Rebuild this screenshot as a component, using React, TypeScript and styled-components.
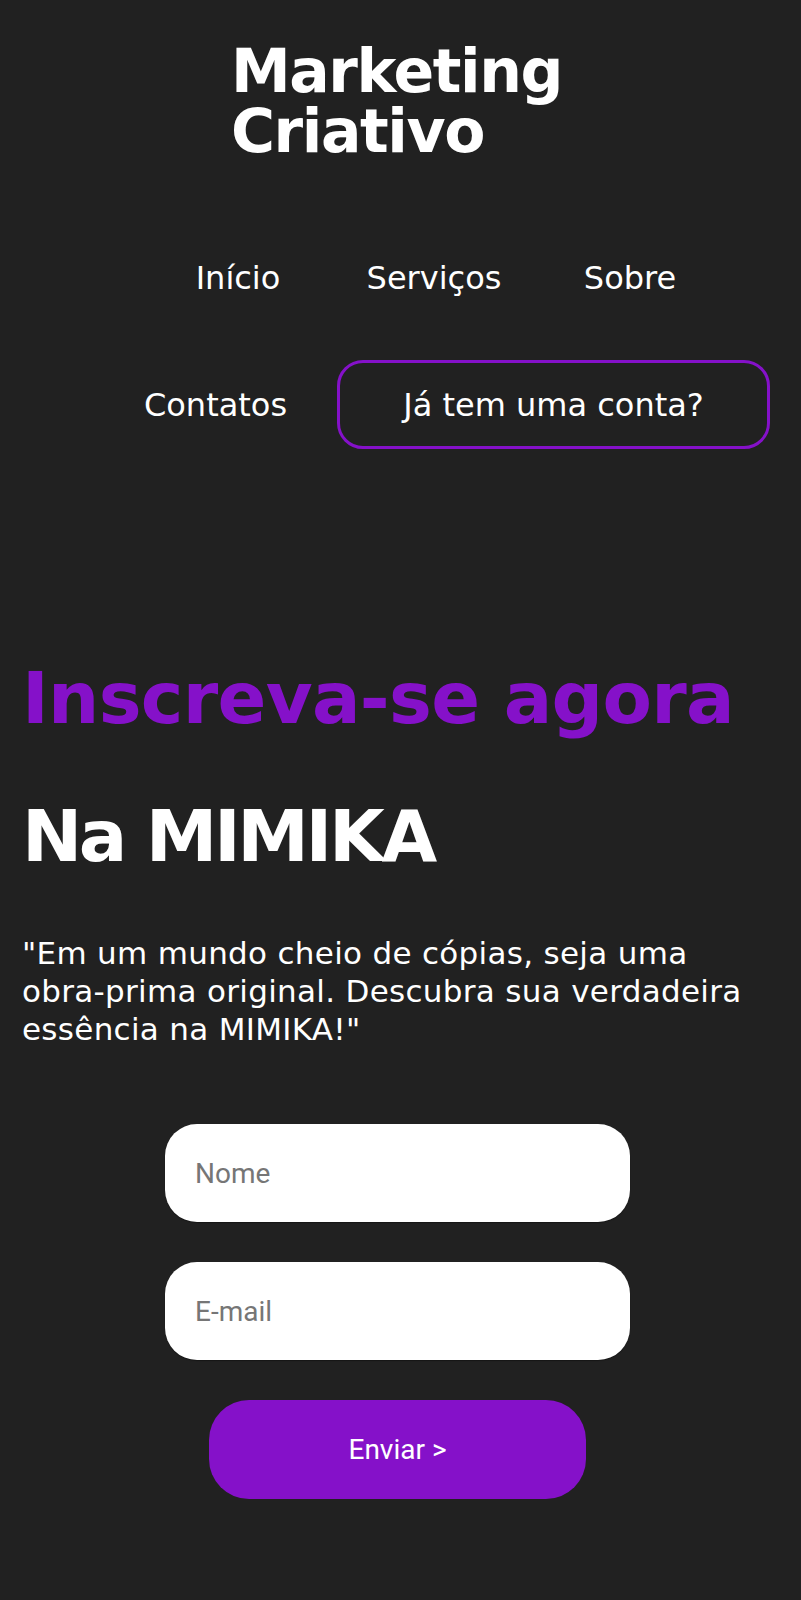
import React from "react";
import styled, { createGlobalStyle } from "styled-components";

const GlobalStyle = createGlobalStyle`
  * { box-sizing: border-box; }
  html, body {
    margin: 0;
    padding: 0;
    background: #212121;
  }
  body {
    min-height: 100vh;
    font-family: "DejaVu Sans", "Liberation Sans", sans-serif;
    color: #ffffff;
  }
`;

const PURPLE = "#8511c9";

const Page = styled.div`
  min-height: 1600px;
  background: #212121;
  display: flex;
  flex-direction: column;
`;

const Header = styled.header`
  display: flex;
  flex-direction: column;
  align-items: center;
  padding-top: 41px;
`;

const Logo = styled.h1`
  margin: 0;
  width: fit-content;
  font-family: "DejaVu Sans", sans-serif;
  font-weight: 700;
  font-size: 60px;
  line-height: 60px;
  letter-spacing: -1.4px;
  color: #ffffff;
  transform: translateX(-4px);
`;

const Nav = styled.nav`
  display: flex;
  flex-direction: column;
  align-self: stretch;
  margin-top: 97px;
  gap: 62px;
`;

const NavRow = styled.ul<{ $cols: string; $gap: number }>`
  list-style: none;
  margin: 0;
  padding: 0 0 0 140px;
  display: grid;
  grid-template-columns: ${(p) => p.$cols};
  column-gap: ${(p) => p.$gap}px;
  align-items: center;
`;

const NavItem = styled.li`
  display: flex;
  justify-content: center;
`;

const NavLink = styled.a`
  font-family: "DejaVu Sans", sans-serif;
  font-size: 32px;
  line-height: 40px;
  color: #ffffff;
  text-decoration: none;
  white-space: nowrap;
`;

const AccountButton = styled.button`
  width: 433px;
  height: 89px;
  border: 3px solid ${PURPLE};
  border-radius: 26px;
  background: transparent;
  color: #ffffff;
  font-family: "DejaVu Sans", sans-serif;
  font-size: 32px;
  line-height: 40px;
  padding: 0;
  cursor: pointer;
`;

const Hero = styled.section`
  padding: 0 22px;
  margin-top: 206px;
  display: flex;
  flex-direction: column;
`;

const Headline = styled.h2<{ $color: string; $top: number; $spacing: number }>`
  margin: ${(p) => p.$top}px 0 0;
  font-family: "DejaVu Sans", sans-serif;
  font-weight: 700;
  font-size: 72px;
  line-height: 86px;
  letter-spacing: ${(p) => p.$spacing}px;
  color: ${(p) => p.$color};
  white-space: nowrap;
`;

const Quote = styled.p`
  margin: 55px 0 0;
  max-width: 740px;
  font-family: "DejaVu Sans", sans-serif;
  font-size: 31px;
  line-height: 38px;
  letter-spacing: 0.3px;
  color: #ffffff;
`;

const Form = styled.form`
  margin-top: 76px;
  display: flex;
  flex-direction: column;
  align-items: center;
  gap: 40px;
  padding-right: 6px;
`;

const Field = styled.input`
  width: 465px;
  height: 98px;
  border: none;
  border-radius: 32px;
  background: #ffffff;
  padding: 0 30px;
  font-family: Roboto, "Liberation Sans", sans-serif;
  font-size: 28px;
  color: #222;
  box-shadow: 0 1px 1px rgba(0, 0, 0, 0.35);
  outline: none;

  &::placeholder {
    color: #767676;
  }
`;

const Submit = styled.button`
  width: 377px;
  height: 99px;
  border: none;
  border-radius: 40px;
  background: ${PURPLE};
  color: #ffffff;
  font-family: Roboto, "Liberation Sans", sans-serif;
  font-size: 28px;
  cursor: pointer;
`;

export default function App() {
  return (
    <>
      <GlobalStyle />
      <Page>
        <Header>
          <Logo>
            Marketing
            <br />
            Criativo
          </Logo>
          <Nav>
            <NavRow $cols="196px 196px 196px" $gap={0}>
              <NavItem>
                <NavLink href="#">Início</NavLink>
              </NavItem>
              <NavItem>
                <NavLink href="#">Serviços</NavLink>
              </NavItem>
              <NavItem>
                <NavLink href="#">Sobre</NavLink>
              </NavItem>
            </NavRow>
            <NavRow $cols="151px 433px" $gap={46}>
              <NavItem>
                <NavLink href="#">Contatos</NavLink>
              </NavItem>
              <NavItem>
                <AccountButton type="button">Já tem uma conta?</AccountButton>
              </NavItem>
            </NavRow>
          </Nav>
        </Header>
        <Hero>
          <Headline $color={PURPLE} $top={0} $spacing={-0.7}>
            Inscreva-se agora
          </Headline>
          <Headline $color="#ffffff" $top={52} $spacing={-3.4}>
            Na MIMIKA
          </Headline>
          <Quote>
            "Em um mundo cheio de cópias, seja uma obra-prima original. Descubra
            sua verdadeira essência na MIMIKA!"
          </Quote>
          <Form onSubmit={(e) => e.preventDefault()}>
            <Field type="text" placeholder="Nome" />
            <Field type="email" placeholder="E-mail" />
            <Submit type="submit">Enviar &gt;</Submit>
          </Form>
        </Hero>
      </Page>
    </>
  );
}
